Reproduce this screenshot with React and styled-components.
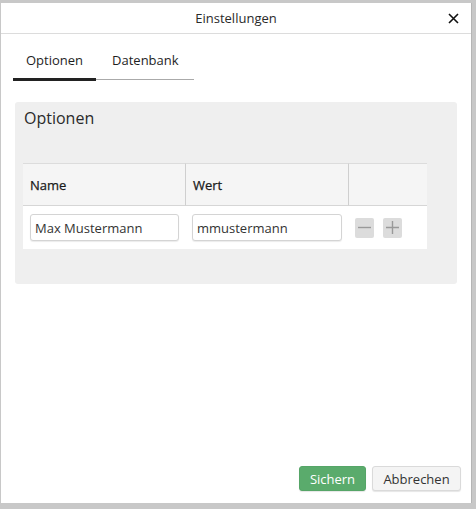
import React, { useState } from "react";
import styled, { createGlobalStyle } from "styled-components";

const Global = createGlobalStyle`
  html, body { margin: 0; padding: 0; }
  body {
    background: #c8c8c8;
    font-family: "Open Sans", "Liberation Sans", sans-serif;
    font-size: 13px;
    color: #333;
  }
  * { box-sizing: border-box; }
`;

const Backdrop = styled.div`
  width: 476px;
  height: 509px;
  padding: 3px 4px 6px 1px;
`;

const Dialog = styled.div`
  width: 471px;
  height: 500px;
  background: #fff;
  display: flex;
  flex-direction: column;
  border-right: 1px solid #b5b5b5;
`;

const Header = styled.div`
  height: 31px;
  flex: none;
  border-bottom: 1px solid #dcdcdc;
  display: flex;
  align-items: center;
  justify-content: center;
  position: relative;
`;

const Title = styled.div`
  font-size: 13px;
  color: #2a2a2a;
`;

const Close = styled.button`
  position: absolute;
  right: 10px;
  top: 7px;
  width: 16px;
  height: 16px;
  padding: 0;
  border: none;
  background: transparent;
  display: flex;
  align-items: center;
  justify-content: center;
`;

const Body = styled.div`
  flex: 1;
  padding: 13px 14px 0 12px;
  display: flex;
  flex-direction: column;
`;

const Tabs = styled.div`
  display: flex;
  width: 181px;
  border-bottom: 1px solid #aaa;
`;

const Tab = styled.div`
  height: 34px;
  padding: 0 ${(p) => p.$pad}px 5px;
  display: flex;
  align-items: center;
  font-size: 13px;
  color: #1e1e1e;
  margin-bottom: -2px;
  border-bottom: 3px solid ${(p) => (p.$active ? "#222" : "transparent")};
  cursor: pointer;
`;

const Panel = styled.div`
  margin-top: 22px;
  margin-left: 2px;
  width: 442px;
  background: #efefef;
  border-radius: 3px;
  padding: 4px 30px 35px 8px;
`;

const PanelTitle = styled.div`
  font-size: 16px;
  color: #2a2a2a;
  padding-left: 1px;
  height: 25px;
  line-height: 25px;
  margin-bottom: 32px;
`;

const Table = styled.div`
  width: 404px;
  display: grid;
  grid-template-columns: 162px 163px 79px;
`;

const HeadCell = styled.div`
  height: 43px;
  background: #f5f5f5;
  border-top: 1px solid #dcdcdc;
  border-bottom: 1px solid #d6d6d6;
  border-left: ${(p) => (p.$divider ? "1px solid #cfcfcf" : "none")};
  display: flex;
  align-items: center;
  padding-left: 7px;
  font-size: 13px;
  font-weight: 400;
  color: #1a1a1a;
  -webkit-text-stroke: 0.25px #1a1a1a;
`;

const Cell = styled.div`
  height: 43px;
  background: #fff;
  display: flex;
  align-items: center;
  padding-left: ${(p) => p.$pl}px;
  gap: 9px;
`;

const Input = styled.input`
  width: ${(p) => p.$w}px;
  height: 27px;
  border: 1px solid #d4d4d4;
  border-radius: 3px;
  box-shadow: 0 1px 1px rgba(0, 0, 0, 0.08);
  padding: 0 4px;
  font-family: "Open Sans", "Liberation Sans", sans-serif;
  font-size: 13px;
  color: #333;
  outline: none;
  background: #fff;
`;

const IconBtn = styled.button`
  width: 19px;
  height: 20px;
  border: none;
  border-radius: 2px;
  background: #dcdcdc;
  padding: 0;
  display: flex;
  align-items: center;
  justify-content: center;
`;

const Footer = styled.div`
  display: flex;
  justify-content: flex-end;
  gap: 6px;
  padding: 0 10px 12px 0;
`;

const Button = styled.button`
  height: 25px;
  width: ${(p) => p.$w}px;
  border-radius: 3px;
  font-family: "Open Sans", "Liberation Sans", sans-serif;
  font-size: 13px;
  padding: 0;
  border: 1px solid ${(p) => (p.$primary ? "#55a567" : "#dadada")};
  background: ${(p) => (p.$primary ? "#5aab6c" : "#f4f4f4")};
  color: ${(p) => (p.$primary ? "#fff" : "#333")};
  box-shadow: 0 1px 1px rgba(0, 0, 0, 0.1);
`;

export default function App() {
  const [tab, setTab] = useState(0);
  const [name, setName] = useState("Max Mustermann");
  const [value, setValue] = useState("mmustermann");
  return (
    <>
      <Global />
      <Backdrop>
        <Dialog>
          <Header>
            <Title>Einstellungen</Title>
            <Close aria-label="close">
              <svg width="11" height="11" viewBox="0 0 11 11">
                <path d="M1 1L10 10M10 1L1 10" stroke="#111" strokeWidth="1.6" />
              </svg>
            </Close>
          </Header>
          <Body>
            <Tabs>
              <Tab $pad={13} $active={tab === 0} onClick={() => setTab(0)}>
                Optionen
              </Tab>
              <Tab $pad={16} $active={tab === 1} onClick={() => setTab(1)}>
                Datenbank
              </Tab>
            </Tabs>
            <Panel>
              <PanelTitle>Optionen</PanelTitle>
              <Table>
                <HeadCell>Name</HeadCell>
                <HeadCell $divider>Wert</HeadCell>
                <HeadCell $divider />
                <Cell $pl={7}>
                  <Input $w={149} value={name} onChange={(e) => setName(e.target.value)} />
                </Cell>
                <Cell $pl={7}>
                  <Input $w={150} value={value} onChange={(e) => setValue(e.target.value)} />
                </Cell>
                <Cell $pl={7}>
                  <IconBtn aria-label="remove">
                    <svg width="13" height="13" viewBox="0 0 13 13">
                      <path d="M0 6.5H13" stroke="#999" strokeWidth="1.4" />
                    </svg>
                  </IconBtn>
                  <IconBtn aria-label="add">
                    <svg width="13" height="13" viewBox="0 0 13 13">
                      <path d="M0 6.5H13M6.5 0V13" stroke="#999" strokeWidth="1.4" />
                    </svg>
                  </IconBtn>
                </Cell>
              </Table>
            </Panel>
          </Body>
          <Footer>
            <Button $primary $w={67}>Sichern</Button>
            <Button $w={89}>Abbrechen</Button>
          </Footer>
        </Dialog>
      </Backdrop>
    </>
  );
}
